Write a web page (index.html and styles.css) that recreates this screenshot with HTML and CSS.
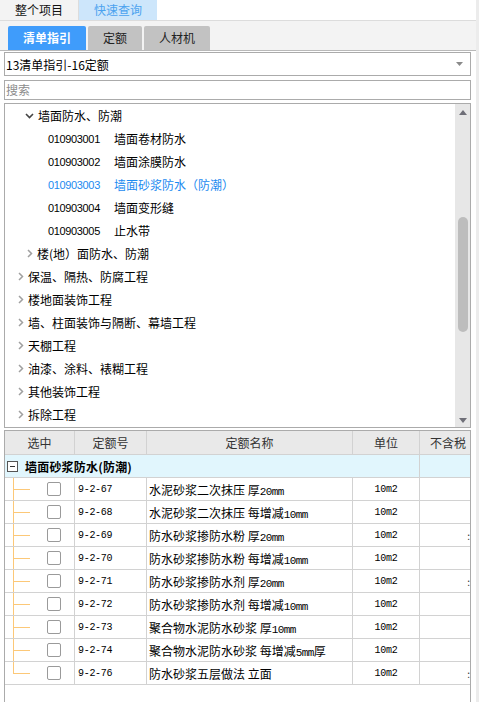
FILE: index.html
```html
<!DOCTYPE html>
<html>
<head>
<meta charset="utf-8">
<link rel="stylesheet" href="styles.css">
</head>
<body>
<div class="app">
  <div class="toptabs">
    <div class="ttab active">整个项目</div>
    <div class="ttab quick">快速查询</div>
  </div>
  <div class="subbar">
    <div class="stab on">清单指引</div>
    <div class="stab s2">定额</div>
    <div class="stab s3">人材机</div>
  </div>
  <div class="content">
    <div class="select">
      <span>13清单指引-16定额</span>
      <svg class="caret" width="7" height="4" viewBox="0 0 7 4"><path d="M0 0h7L3.5 4z" fill="#8a8a8a"/></svg>
    </div>
    <div class="search">搜索</div>
    <div class="tree">
      <div class="tree-list">
        <div class="row l2"><svg class="chev" width="9" height="6" viewBox="0 0 9 6"><path d="M1 1l3.5 3.5L8 1" stroke="#444" stroke-width="1.6" fill="none"/></svg><span>墙面防水、防潮</span></div>
        <div class="row l3"><span class="code">010903001</span><span>墙面卷材防水</span></div>
        <div class="row l3"><span class="code">010903002</span><span>墙面涂膜防水</span></div>
        <div class="row l3 sel"><span class="code">010903003</span><span>墙面砂浆防水（防潮）</span></div>
        <div class="row l3"><span class="code">010903004</span><span>墙面变形缝</span></div>
        <div class="row l3"><span class="code">010903005</span><span>止水带</span></div>
        <div class="row l2"><svg class="chevr" width="6" height="9" viewBox="0 0 6 9"><path d="M1 1l3.5 3.5L1 8" stroke="#a0a0a0" stroke-width="1.5" fill="none"/></svg><span>楼(地）面防水、防潮</span></div>
        <div class="row l1"><svg class="chevr" width="6" height="9" viewBox="0 0 6 9"><path d="M1 1l3.5 3.5L1 8" stroke="#a0a0a0" stroke-width="1.5" fill="none"/></svg><span>保温、隔热、防腐工程</span></div>
        <div class="row l1"><svg class="chevr" width="6" height="9" viewBox="0 0 6 9"><path d="M1 1l3.5 3.5L1 8" stroke="#a0a0a0" stroke-width="1.5" fill="none"/></svg><span>楼地面装饰工程</span></div>
        <div class="row l1"><svg class="chevr" width="6" height="9" viewBox="0 0 6 9"><path d="M1 1l3.5 3.5L1 8" stroke="#a0a0a0" stroke-width="1.5" fill="none"/></svg><span>墙、柱面装饰与隔断、幕墙工程</span></div>
        <div class="row l1"><svg class="chevr" width="6" height="9" viewBox="0 0 6 9"><path d="M1 1l3.5 3.5L1 8" stroke="#a0a0a0" stroke-width="1.5" fill="none"/></svg><span>天棚工程</span></div>
        <div class="row l1"><svg class="chevr" width="6" height="9" viewBox="0 0 6 9"><path d="M1 1l3.5 3.5L1 8" stroke="#a0a0a0" stroke-width="1.5" fill="none"/></svg><span>油漆、涂料、裱糊工程</span></div>
        <div class="row l1"><svg class="chevr" width="6" height="9" viewBox="0 0 6 9"><path d="M1 1l3.5 3.5L1 8" stroke="#a0a0a0" stroke-width="1.5" fill="none"/></svg><span>其他装饰工程</span></div>
        <div class="row l1"><svg class="chevr" width="6" height="9" viewBox="0 0 6 9"><path d="M1 1l3.5 3.5L1 8" stroke="#a0a0a0" stroke-width="1.5" fill="none"/></svg><span>拆除工程</span></div>
      </div>
      <div class="vscroll">
        <svg class="arr" width="8" height="5" viewBox="0 0 8 5"><path d="M0 5L4 0l4 5z" fill="#6f6f78"/></svg>
        <div class="track"><div class="thumb"></div></div>
        <svg class="arr" width="8" height="5" viewBox="0 0 8 5"><path d="M0 0h8L4 5z" fill="#6f6f78"/></svg>
      </div>
    </div>
    <div class="grid">
      <div class="tr head">
        <div class="c c1">选中</div>
        <div class="c c2">定额号</div>
        <div class="c c3">定额名称</div>
        <div class="c c4">单位</div>
        <div class="c c5 clip">不含税</div>
      </div>
      <div class="tr group">
        <div class="c gspan"><span class="minus"></span><b>墙面砂浆防水(防潮)</b></div>
        <div class="c c5"></div>
      </div>
      <div class="tr item">
        <div class="c c1 tl"><span class="cb"></span></div><div class="c c2 mono">9-2-67</div><div class="c c3"><span>水泥砂浆二次抹压 厚<span class="mono">20mm</span></span></div><div class="c c4 mono">10m2</div><div class="c c5"></div>
      </div>
      <div class="tr item">
        <div class="c c1 tl"><span class="cb"></span></div><div class="c c2 mono">9-2-68</div><div class="c c3"><span>水泥砂浆二次抹压 每增减<span class="mono">10mm</span></span></div><div class="c c4 mono">10m2</div><div class="c c5"></div>
      </div>
      <div class="tr item">
        <div class="c c1 tl"><span class="cb"></span></div><div class="c c2 mono">9-2-69</div><div class="c c3"><span>防水砂浆掺防水粉 厚<span class="mono">20mm</span></span></div><div class="c c4 mono">10m2</div><div class="c c5 tick">:</div>
      </div>
      <div class="tr item">
        <div class="c c1 tl"><span class="cb"></span></div><div class="c c2 mono">9-2-70</div><div class="c c3"><span>防水砂浆掺防水粉 每增减<span class="mono">10mm</span></span></div><div class="c c4 mono">10m2</div><div class="c c5"></div>
      </div>
      <div class="tr item">
        <div class="c c1 tl"><span class="cb"></span></div><div class="c c2 mono">9-2-71</div><div class="c c3"><span>防水砂浆掺防水剂 厚<span class="mono">20mm</span></span></div><div class="c c4 mono">10m2</div><div class="c c5 tick">:</div>
      </div>
      <div class="tr item">
        <div class="c c1 tl"><span class="cb"></span></div><div class="c c2 mono">9-2-72</div><div class="c c3"><span>防水砂浆掺防水剂 每增减<span class="mono">10mm</span></span></div><div class="c c4 mono">10m2</div><div class="c c5"></div>
      </div>
      <div class="tr item">
        <div class="c c1 tl"><span class="cb"></span></div><div class="c c2 mono">9-2-73</div><div class="c c3"><span>聚合物水泥防水砂浆 厚<span class="mono">10mm</span></span></div><div class="c c4 mono">10m2</div><div class="c c5"></div>
      </div>
      <div class="tr item">
        <div class="c c1 tl"><span class="cb"></span></div><div class="c c2 mono">9-2-74</div><div class="c c3"><span>聚合物水泥防水砂浆 每增减<span class="mono">5mm</span>厚</span></div><div class="c c4 mono">10m2</div><div class="c c5"></div>
      </div>
      <div class="tr item">
        <div class="c c1 tl last"><span class="cb"></span></div><div class="c c2 mono">9-2-76</div><div class="c c3"><span>防水砂浆五层做法 立面</span></div><div class="c c4 mono">10m2</div><div class="c c5 tick">:</div>
      </div>
    </div>
  </div>
</div>
</body>
</html>
```

FILE: styles.css
```css
* { box-sizing: border-box; }
html, body { margin: 0; padding: 0; }
body {
  background: #fff;
  font-family: "Noto Sans CJK SC", "Liberation Sans", sans-serif;
  font-size: 12px;
  color: #000;
  overflow: hidden;
}
.app {
  width: 479px;
  height: 702px;
  border-right: 3px solid #ececec;
  display: flex;
  flex-direction: column;
}
.toptabs {
  height: 21px;
  display: flex;
  border-bottom: 1px solid #dcdcdc;
  background: #fff;
}
.ttab {
  height: 20px;
  line-height: 20px;
  text-align: center;
  font-size: 12px;
}
.ttab.active { width: 78px; background: #f3f3f3; color: #111; }
.ttab.quick { width: 79px; background: #cde6fb; color: #4ba2ef; border-left: 1px solid #dcdcdc; }
.subbar {
  height: 30px;
  background: #f3f3f3;
  border-bottom: 1px solid #b9b9b9;
  display: flex;
  align-items: flex-end;
  gap: 2px;
  padding-left: 8px;
}
.stab {
  height: 24px;
  line-height: 24px;
  text-align: center;
  font-size: 12px;
  background: #c2c2c2;
  color: #222;
  border-radius: 2px 2px 0 0;
}
.stab.on { width: 78px; background: #3f9cfb; color: #fff; font-weight: bold; }
.stab.s2 { width: 54px; }
.stab.s3 { width: 66px; }
.content {
  flex: 1;
  padding: 1px 5px 0 4px;
  display: flex;
  flex-direction: column;
  min-height: 0;
}
.select {
  height: 24px;
  border: 1px solid #ababab;
  display: flex;
  align-items: center;
  justify-content: space-between;
  padding: 0 6px 0 1px;
  font-size: 12px;
}
.caret { margin-right: 1px; }
.search {
  margin-top: 4px;
  height: 20px;
  border: 1px solid #ababab;
  line-height: 18px;
  padding-left: 1px;
  color: #8c8c8c;
  font-size: 12px;
}
.tree {
  margin-top: 3px;
  height: 325px;
  border: 1px solid #ababab;
  display: flex;
}
.tree-list { flex: 1; }
.row {
  height: 23px;
  display: flex;
  align-items: center;
  font-size: 12px;
  white-space: nowrap;
}
.row.l1 { padding-left: 13px; }
.row.l2 { padding-left: 20px; }
.row.l3 { padding-left: 43px; }
.chev { margin-right: 4px; }
.chevr { margin-right: 4px; }
.row.l2 .chevr { margin-left: 2px; }
.code {
  font-family: "Liberation Sans", sans-serif;
  font-size: 11px;
  width: 66px;
  letter-spacing: -0.35px;
}
.row.sel { color: #1c8af0; }
.vscroll {
  width: 15px;
  background: #e7e7e7;
  display: flex;
  flex-direction: column;
  align-items: center;
  padding: 6px 0 4px;
}
.arr { flex: none; }
.track { flex: 1; width: 100%; padding: 0 2px; }
.thumb {
  margin-top: 102px;
  height: 115px;
  width: 10px;
  margin-left: 1px;
  background: #bdbdbd;
  border-radius: 5px;
}
.grid {
  margin-top: 2px;
  flex: 1;
  border: 1px solid #ababab;
  border-bottom: none;
}
.tr { display: flex; height: 23px; }
.tr.head { height: 24px; background: #e9e9e9; }
.c {
  border-right: 1px solid #d2d2d2;
  border-bottom: 1px solid #d2d2d2;
  display: flex;
  align-items: center;
  white-space: nowrap;
  overflow: hidden;
}
.c1 { width: 70px; }
.c2 { width: 72px; padding-left: 3px; }
.c3 { width: 206px; padding-left: 2px; }
.c4 { width: 67px; justify-content: center; }
.c5 { width: 50px; border-right: none; }
.head .c { justify-content: center; color: #333; padding-left: 0; }
.head .clip { justify-content: flex-start; padding-left: 10px; }
.tr.group { background: #e1f6fd; }
.gspan { width: 415px; padding-left: 2px; }
.gspan b { font-weight: bold; letter-spacing: 0.2px; }
.minus {
  width: 11px;
  height: 11px;
  border: 1px solid #555;
  background: #fff;
  margin-right: 7px;
  position: relative;
}
.minus::after {
  content: "";
  position: absolute;
  left: 2px;
  right: 2px;
  top: 4px;
  height: 1px;
  background: #333;
}
.mono {
  font-family: "Liberation Mono", monospace;
  font-size: 10px;
  letter-spacing: -0.3px;
}
.c3 .mono { font-size: 11px; letter-spacing: -0.6px; }
.tl { position: relative; padding-left: 42px; }
.tl::before {
  content: "";
  position: absolute;
  left: 8px;
  top: -1px;
  bottom: -1px;
  width: 1px;
  background: #fcc878;
}
.tl.last::before { bottom: auto; height: 12px; }
.tl::after {
  content: "";
  position: absolute;
  left: 8px;
  width: 17px;
  top: 11px;
  height: 1px;
  background: #fcc878;
}
.cb {
  width: 14px;
  height: 14px;
  border: 1px solid #9a9a9a;
  border-radius: 2px;
  background: #fff;
}
.tick { justify-content: flex-end; font-size: 10px; color: #333; margin-right: -1px; }
```
